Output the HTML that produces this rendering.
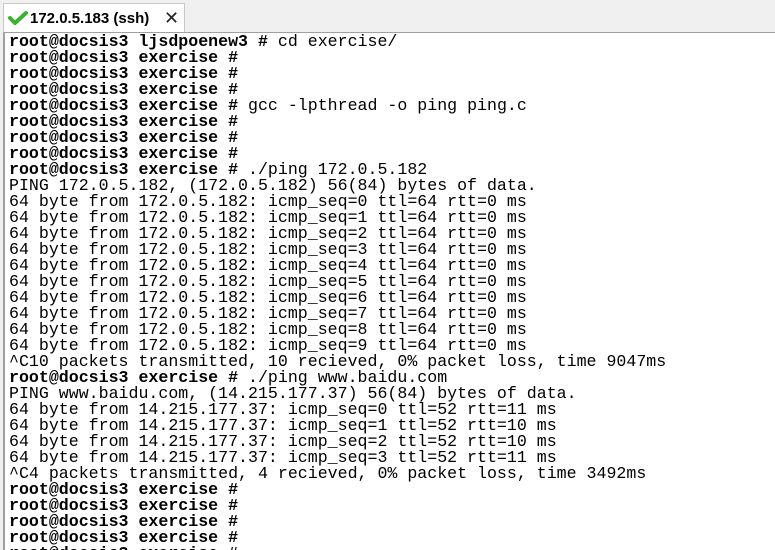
<!DOCTYPE html>
<html><head><meta charset="utf-8"><style>
html,body{margin:0;padding:0;width:775px;height:550px;overflow:hidden;background:#f0f0f0;}
.tab{position:absolute;left:3px;top:3px;width:182px;height:29px;background:#fff;border:1px solid #c8c8c8;border-bottom:none;box-sizing:border-box;}
.tab .t{position:absolute;left:26px;top:6px;font:bold 15px "Liberation Sans",sans-serif;color:#000;}
.tab .x{position:absolute;left:160px;top:4px;font:18px "Liberation Sans",sans-serif;color:#222;}
.term{position:absolute;left:3px;top:32px;width:772px;height:518px;background:#fff;border-left:2px solid #a0a0a0;border-top:1px solid #a0a0a0;box-sizing:border-box;overflow:hidden;}
pre{margin:0;position:absolute;left:4px;top:1px;font-family:"Liberation Mono",monospace;font-size:16.6px;line-height:16px;color:#000;letter-spacing:0;}
b{font-weight:bold;}
</style></head><body>
<div class="tab">
<svg style="position:absolute;left:4px;top:7px" width="20" height="14" viewBox="0 0 20 14"><path d="M2 7 L7 12 L18 2" stroke="#3cb030" stroke-width="4" fill="none" stroke-linecap="round"/></svg>
<span class="t">172.0.5.183 (ssh)</span><span class="x">✕</span></div>
<div class="term"><pre><b>root@docsis3 ljsdpoenew3 # </b>cd exercise/
<b>root@docsis3 exercise # </b>
<b>root@docsis3 exercise # </b>
<b>root@docsis3 exercise # </b>
<b>root@docsis3 exercise # </b>gcc -lpthread -o ping ping.c
<b>root@docsis3 exercise # </b>
<b>root@docsis3 exercise # </b>
<b>root@docsis3 exercise # </b>
<b>root@docsis3 exercise # </b>./ping 172.0.5.182
PING 172.0.5.182, (172.0.5.182) 56(84) bytes of data.
64 byte from 172.0.5.182: icmp_seq=0 ttl=64 rtt=0 ms
64 byte from 172.0.5.182: icmp_seq=1 ttl=64 rtt=0 ms
64 byte from 172.0.5.182: icmp_seq=2 ttl=64 rtt=0 ms
64 byte from 172.0.5.182: icmp_seq=3 ttl=64 rtt=0 ms
64 byte from 172.0.5.182: icmp_seq=4 ttl=64 rtt=0 ms
64 byte from 172.0.5.182: icmp_seq=5 ttl=64 rtt=0 ms
64 byte from 172.0.5.182: icmp_seq=6 ttl=64 rtt=0 ms
64 byte from 172.0.5.182: icmp_seq=7 ttl=64 rtt=0 ms
64 byte from 172.0.5.182: icmp_seq=8 ttl=64 rtt=0 ms
64 byte from 172.0.5.182: icmp_seq=9 ttl=64 rtt=0 ms
^C10 packets transmitted, 10 recieved, 0% packet loss, time 9047ms
<b>root@docsis3 exercise # </b>./ping www.baidu.com
PING www.baidu.com, (14.215.177.37) 56(84) bytes of data.
64 byte from 14.215.177.37: icmp_seq=0 ttl=52 rtt=11 ms
64 byte from 14.215.177.37: icmp_seq=1 ttl=52 rtt=10 ms
64 byte from 14.215.177.37: icmp_seq=2 ttl=52 rtt=10 ms
64 byte from 14.215.177.37: icmp_seq=3 ttl=52 rtt=11 ms
^C4 packets transmitted, 4 recieved, 0% packet loss, time 3492ms
<b>root@docsis3 exercise # </b>
<b>root@docsis3 exercise # </b>
<b>root@docsis3 exercise # </b>
<b>root@docsis3 exercise # </b>
<b>root@docsis3 exercise # </b></pre></div>
</body></html>
